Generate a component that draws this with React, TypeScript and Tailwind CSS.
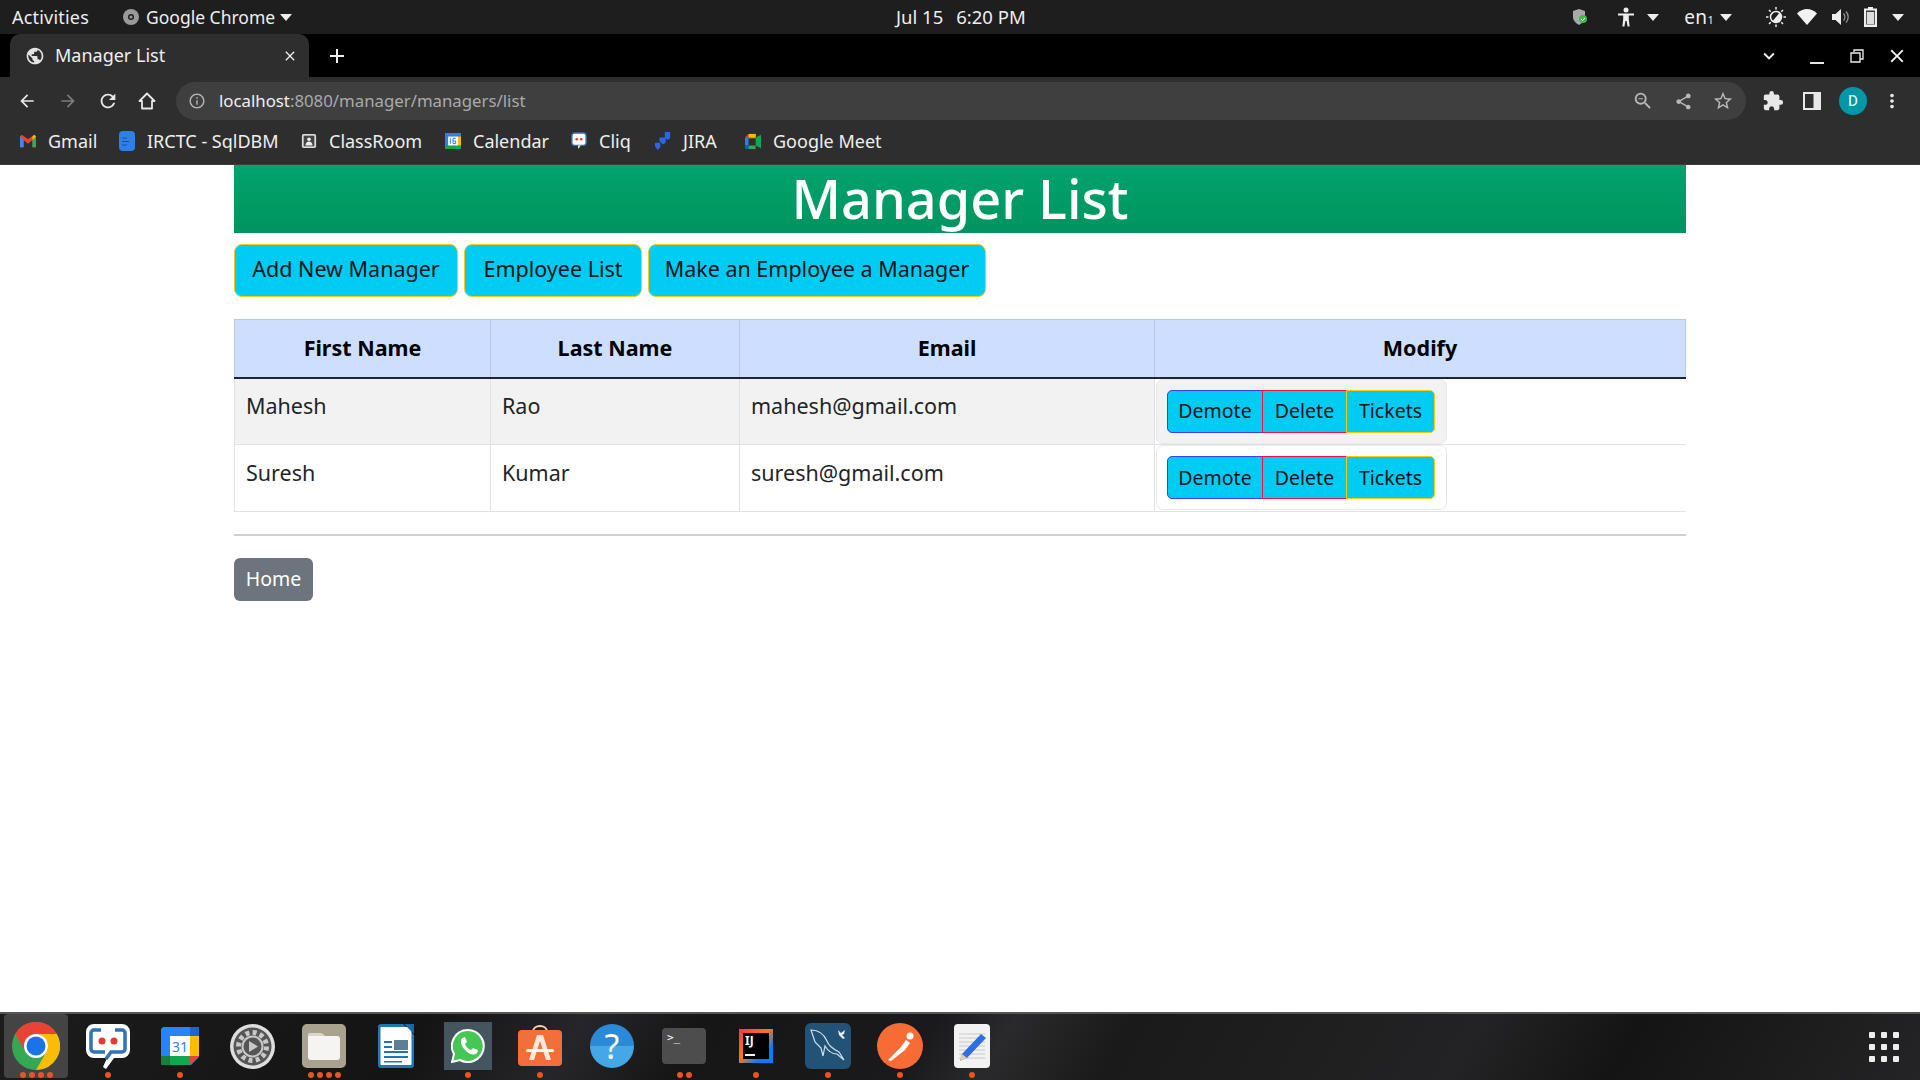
import { MdAdd, MdArrowBack, MdArrowForward, MdClose, MdExtension, MdInfoOutline, MdMoreVert, MdPublic, MdRefresh, MdShare, MdStarBorder, MdZoomOut, MdKeyboardArrowDown } from 'react-icons/md';

const ubuntu = "font-['Noto_Sans','Open_Sans',sans-serif]";

function Caret({ className = '' }: { className?: string }) {
  return (
    <svg width="12" height="7" viewBox="0 0 12 7" className={className}>
      <path d="M0 0h12L6 7z" fill="#eeeeee" />
    </svg>
  );
}

function TopBar() {
  return (
    <div className={`flex h-[34px] items-center bg-[#1e1e1e] text-[#eeeeee] ${ubuntu} relative`}>
      <span className="ml-3 w-[77px] text-[18px] tracking-[0.2px]">Activities</span>
      <svg width="16" height="16" viewBox="0 0 16 16" className="ml-[34px]">
        <circle cx="8" cy="8" r="8" fill="#9a9a9a" />
        <circle cx="8" cy="8" r="3" fill="#1e1e1e" />
        <circle cx="8" cy="8" r="1.6" fill="#9a9a9a" />
      </svg>
      <span className="ml-[7px] w-[128px] whitespace-nowrap text-[17.5px]">Google Chrome</span>
      <Caret className="ml-[6px]" />
      <div className="absolute left-[896px] top-0 flex h-[34px] items-center gap-[13px] text-[18.5px]">
        <span>Jul 15</span>
        <span>6:20 PM</span>
      </div>
      <div className="ml-auto flex items-center">
        <svg width="16" height="18" viewBox="0 0 16 18" className="mr-[29px]">
          <path d="M1 3l6-2 6 2v6c0 4-3 6-6 8-3-2-6-4-6-8z" fill="#a8a8a8" />
          <circle cx="11" cy="11" r="4" fill="#3dbb4e" />
          <path d="M9 11l1.5 1.5L13 10" stroke="#fff" strokeWidth="1" fill="none" />
        </svg>
        <svg width="18" height="20" viewBox="0 0 18 20" className="mr-[12px]">
          <circle cx="9" cy="3" r="2.5" fill="#eee" />
          <path d="M1 6.5h16v2h-5.2V12l.8 7.5h-2L9.6 14H8.4l-1 5.500h-2l.8-7.5V8.500H1z" fill="#eee" />
        </svg>
        <Caret className="mr-[25px]" />
        <span className="mr-[6px] text-[19px] leading-none tracking-[0.3px]">en<span className="text-[11px]">1</span></span>
        <Caret className="mr-[34px]" />
        <svg width="20" height="20" viewBox="0 0 20 20" className="mr-[11px]">
          <circle cx="10" cy="10" r="5.500" fill="none" stroke="#eee" strokeWidth="1.500" />
          <path d="M10 4.500a5.500 5.500 0 0 1 0 11z" fill="#eee" transform="rotate(40 10 10)" />
          <path d="M10 0v2.500M10 17.500V20M0 10h2.500M17.500 10H20M3 3l1.700 1.700M15.300 15.300L17 17M3 17l1.700-1.700M15.300 4.700L17 3" stroke="#eee" strokeWidth="1.500" />
        </svg>
        <svg width="20" height="16" viewBox="0 0 20 16" className="mr-[15px]">
          <path d="M0 4.500C5.500-1.500 14.500-1.500 20 4.500L10 16z" fill="#f2f2f2" />
        </svg>
        <svg width="19" height="16" viewBox="0 0 19 16" className="mr-[13px]">
          <path d="M0 5h3.500L9 0v16l-5.500-5H0z" fill="#eee" />
          <path d="M11.500 4.500a5 5 0 0 1 0 7M14 2.500a8 8 0 0 1 0 11" stroke="#999" strokeWidth="1.200" fill="none" />
        </svg>
        <svg width="13" height="20" viewBox="0 0 13 20" className="mr-[15px]">
          <path d="M4 0h5v1.500h4V20H0V1.500h4z" fill="#eee" />
          <rect x="2" y="3.500" width="9" height="14" fill="#3a3a3a" />
          <rect x="2.800" y="5" width="7.400" height="12" fill="#dddddd" />
        </svg>
        <Caret className="mr-[16px]" />
      </div>
    </div>
  );
}

function TabStrip() {
  return (
    <div className={`flex h-[43px] items-stretch bg-black text-[#eeeeee] ${ubuntu}`}>
      <div className="ml-[10px] flex w-[299px] items-center rounded-t-[10px] bg-[#2e2e2e]">
        <MdPublic className="ml-[15px] text-[#e4e4e4]" size={20} />
        <span className="ml-[10px] text-[18px]">Manager List</span>
        <MdClose className="ml-auto mr-[11px]" size={16} />
      </div>
      <div className="ml-[16px] flex items-center">
        <MdAdd size={24} />
      </div>
      <div className="ml-auto flex items-center text-[#f0f0f0]">
        <MdKeyboardArrowDown size={22} className="mr-[30px]" />
        <div className="mr-[26px] mt-[14px] h-[2px] w-[14px] bg-[#e6e6e6]" />
        <svg width="14" height="14" viewBox="0 0 14 14" className="mr-[22px]">
          <path d="M4 3V1h9v9h-3M1 4h9v9H1z" fill="none" stroke="#eee" strokeWidth="1.300" />
        </svg>
        <MdClose size={22} className="mr-[12px]" />
      </div>
    </div>
  );
}

function Toolbar() {
  return (
    <div className="flex h-[43px] items-center bg-[#2e2e2e] pt-[5px] text-[#e8e8e8]">
      <MdArrowBack size={20} className="ml-[17px]" />
      <MdArrowForward size={20} className="ml-[21px] text-[#7c7c7c]" />
      <MdRefresh size={22} className="ml-[19px]" />
      <svg width="20" height="20" viewBox="0 0 20 20" className="ml-[18px]">
        <path d="M10 2.500L2.500 10h2.500v7.500h10V10h2.500z" fill="none" stroke="#e8e8e8" strokeWidth="1.800" strokeLinejoin="round" />
      </svg>
      <div className={`ml-[19px] flex h-[38px] flex-1 items-center rounded-full bg-[#3f3f3f] ${ubuntu}`}>
        <MdInfoOutline size={18} className="ml-[12px] text-[#b0b0b0]" />
        <span className="ml-[13px] text-[16.8px] text-[#f0f0f0]">
          localhost<span className="text-[#aaaaaa]">:8080/manager/managers/list</span>
        </span>
        <MdZoomOut size={22} className="ml-auto text-[#b8b8b8]" />
        <MdShare size={19} className="ml-[20px] text-[#b8b8b8]" />
        <MdStarBorder size={22} className="ml-[19px] mr-[12px] text-[#b8b8b8]" />
      </div>
      <MdExtension size={22} className="ml-[16px]" />
      <svg width="18" height="18" viewBox="0 0 18 18" className="ml-[19px]">
        <path d="M0 0h18v18H0z" fill="#e8e8e8" />
        <rect x="2" y="2" width="8.500" height="14" fill="#2e2e2e" />
      </svg>
      <div className="ml-[18px] flex h-7 w-7 items-center justify-center rounded-full bg-[#0097a7] text-[15px] text-white font-['Roboto',sans-serif]">D</div>
      <MdMoreVert size={22} className="ml-[14px] mr-[17px]" />
    </div>
  );
}

function Bookmark({ icon, label, width }: { icon: React.ReactNode; label: string; width: string }) {
  return (
    <div className={`flex items-center ${width}`}>
      <span className="flex w-[16px] justify-center">{icon}</span>
      <span className="ml-[12px] whitespace-nowrap text-[18px]">{label}</span>
    </div>
  );
}

function BookmarksBar() {
  return (
    <div className={`flex h-[45px] items-center border-b border-[#3c3c3c] bg-[#2e2e2e] pb-[2px] pl-[20px] text-[#eeeeee] ${ubuntu}`}>
      <Bookmark
        width="w-[99px]"
        label="Gmail"
        icon={
          <svg width="18" height="14" viewBox="0 0 18 14">
            <path d="M0 2v12h4V6l5 4 5-4v8h4V2l-2-2-7 5-7-5z" fill="#ea4335" />
            <path d="M0 2v12h4V6z" fill="#4285f4" />
            <path d="M14 6v8h4V2z" fill="#34a853" />
            <path d="M16 0l2 2-4 4V2z" fill="#fbbc04" />
          </svg>
        }
      />
      <Bookmark
        width="w-[182px]"
        label="IRCTC - SqlDBM"
        icon={
          <svg width="16" height="20" viewBox="0 0 16 20">
            <rect width="16" height="20" rx="4" fill="#2f7fe8" />
            <path d="M3 7h5M3 10.500h7M3 14h5" stroke="#1a4fa0" strokeWidth="1.200" />
          </svg>
        }
      />
      <Bookmark
        width="w-[144px]"
        label="ClassRoom"
        icon={
          <svg width="18" height="18" viewBox="0 0 18 18">
            <rect x="1" y="1" width="16" height="16" rx="2" fill="#dcdcdc" />
            <rect x="3" y="3" width="12" height="12" fill="#444" />
            <circle cx="9" cy="7" r="2" fill="#eee" />
            <path d="M5 14c0-6 8-6 8 0z" fill="#eee" />
          </svg>
        }
      />
      <Bookmark
        width="w-[126px]"
        label="Calendar"
        icon={
          <svg width="18" height="18" viewBox="0 0 18 18">
            <rect width="18" height="18" fill="#2f7fe8" />
            <rect y="14" width="18" height="4" fill="#0da84f" />
            <rect x="14" y="4" width="4" height="10" fill="#fbbc04" />
            <rect x="3.500" y="4" width="11" height="10" fill="#fff" />
            <path d="M6 6v6M9 6H12M9 6v6h3V9H9" stroke="#1a73e8" strokeWidth="1" fill="none" />
          </svg>
        }
      />
      <Bookmark
        width="w-[84px]"
        label="Cliq"
        icon={
          <svg width="18" height="20" viewBox="0 0 18 20">
            <rect x="1" y="1" width="16" height="14" rx="3" fill="#fff" stroke="#2f6fb5" strokeWidth="1.500" />
            <path d="M8 15v4l3-4z" fill="#fff" />
            <circle cx="6.500" cy="8" r="1.500" fill="#e53935" />
            <circle cx="11.500" cy="8" r="1.500" fill="#e53935" />
          </svg>
        }
      />
      <Bookmark
        width="w-[90px]"
        label="JIRA"
        icon={
          <svg width="18" height="20" viewBox="0 0 18 20">
            <path d="M11 0h6v7l-3 2-3-3z M5 6h7v6l-3 2-4-4z M0 12h6v5l-3 3-3-4z" fill="#2f63e8" />
          </svg>
        }
      />
      <Bookmark
        width="w-[130px]"
        label="Google Meet"
        icon={
          <svg width="18" height="17" viewBox="0 0 18 17">
            <path d="M4 0h8v4H4z" fill="#fbbc04" />
            <path d="M4 0v4H0z" fill="#ea4335" />
            <path d="M0 4h4v9H0z" fill="#2f7fe8" />
            <path d="M0 13h4v4H2a2 2 0 0 1-2-2z" fill="#1a5cc8" />
            <path d="M4 13h8v4H4z" fill="#34a853" />
            <path d="M12 4l6-3v15l-6-3z" fill="#0da84f" />
            <path d="M12 0v5H4V0z" fill="#fbbc04" opacity=".6" />
          </svg>
        }
      />
    </div>
  );
}

function RowActions({ striped }: { striped: boolean }) {
  const btn = 'flex h-[43px] items-center justify-center border bg-[#00cbf3] text-[19.5px] text-[#07141a]';
  return (
    <div className={`ml-px flex h-[65px] w-[291px] items-center rounded-[7px] border border-[#e6e8ea] pl-[10px] ${striped ? 'bg-[#f2f2f2]' : 'bg-white'}`}>
      <button className={`${btn} w-[96px] rounded-l-[5px] border-[#3d3df5]`}>Demote</button>
      <button className={`${btn} -ml-px w-[85px] border-[#ff0a3c]`}>Delete</button>
      <button className={`${btn} -ml-px w-[89px] rounded-r-[5px] border-[#ffc80a]`}>Tickets</button>
    </div>
  );
}

const managers = [
  { first: 'Mahesh', last: 'Rao', email: 'mahesh@gmail.com', height: 'h-[66px]' },
  { first: 'Suresh', last: 'Kumar', email: 'suresh@gmail.com', height: 'h-[67px]' },
];

function Content() {
  const topBtn = 'flex h-[53px] items-center justify-center rounded-[8px] border border-[#ffc80a] bg-[#00cbf3] pb-[2px] text-[21.5px] text-[#07141a]';
  return (
    <div className={`h-[847px] bg-white ${ubuntu}`}>
      <div className="mx-auto w-[1452px]">
        <h1 className="flex h-[68px] items-center justify-center bg-[linear-gradient(#00a36e,#00945f)] pb-[2px] text-[54px] font-medium text-white">
          Manager List
        </h1>
        <div className="mt-[11px] flex gap-[6px]">
          <button className={`${topBtn} w-[224px]`}>Add New Manager</button>
          <button className={`${topBtn} w-[178px]`}>Employee List</button>
          <button className={`${topBtn} w-[338px]`}>Make an Employee a Manager</button>
        </div>
        <table className="mt-[22px] w-[1452px] table-fixed border-collapse">
          <colgroup>
            <col className="w-[256px]" />
            <col className="w-[249px]" />
            <col className="w-[415px]" />
            <col />
          </colgroup>
          <thead>
            <tr className="h-[58px] border-b-2 border-b-[#1f2530] bg-[#cddefe] text-[21.5px] font-bold text-black">
              <th className="border border-b-0 border-[#b6c8e6]">First Name</th>
              <th className="border border-b-0 border-[#b6c8e6]">Last Name</th>
              <th className="border border-b-0 border-[#b6c8e6]">Email</th>
              <th className="border border-b-0 border-[#b6c8e6]">Modify</th>
            </tr>
          </thead>
          <tbody className="text-[21.5px] text-[#212529]">
            {managers.map((m, i) => (
              <tr key={m.email} className={`${m.height} border-b border-[#dee2e6]`}>
                <td className={`border-x border-[#dee2e6] px-[11px] pb-[13px] pt-[4px] ${i === 0 ? 'bg-[#f2f2f2]' : ''}`}>{m.first}</td>
                <td className={`border-x border-[#dee2e6] px-[11px] pb-[13px] pt-[4px] ${i === 0 ? 'bg-[#f2f2f2]' : ''}`}>{m.last}</td>
                <td className={`border-x border-[#dee2e6] px-[11px] pb-[13px] pt-[4px] ${i === 0 ? 'bg-[#f2f2f2]' : ''}`}>{m.email}</td>
                <td className="p-0">
                  <RowActions striped={i === 0} />
                </td>
              </tr>
            ))}
          </tbody>
        </table>
        <hr className="mt-[22px] border-t-2 border-[#cfd0d2]" />
        <button className="mt-[22px] h-[43px] w-[79px] rounded-[6px] bg-[#6c757d] text-[19.5px] text-white">Home</button>
      </div>
    </div>
  );
}

function Dots({ n }: { n: number }) {
  return (
    <div className="absolute bottom-0 left-0 right-0 flex h-[6px] justify-center gap-[3px]">
      {Array.from({ length: n }).map((_, i) => (
        <span key={i} className="h-[6px] w-[6px] rounded-full bg-[#e95420]" />
      ))}
    </div>
  );
}

function DockItem({ dots, children, active }: { dots: number; children: React.ReactNode; active?: boolean }) {
  return (
    <div className="flex w-[72px] justify-center">
      <div className={`relative flex h-[64px] w-[64px] items-center justify-center ${active ? 'rounded-[4px] bg-[#444444]' : ''}`}>
        {children}
        <Dots n={dots} />
      </div>
    </div>
  );
}

function Dock() {
  return (
    <div className="flex h-[68px] items-start border-t-2 border-[#555555] bg-[linear-gradient(120deg,#1c1c1d_0%,#141414_22%,#26262a_30%,#161616_36%,#1a1a1c_48%,#2a2a2c_52%,#1a1a1a_58%,#232325_76%,#141414_84%,#242426_100%)]">
      <DockItem dots={4} active>
        <svg width="48" height="48" viewBox="0 0 48 48">
          <circle cx="24" cy="24" r="24" fill="#34a853" />
          <path d="M24 0A24 24 0 0 1 44.800 12H24A12 12 0 0 0 13.600 30L3.200 12A24 24 0 0 1 24 0z" fill="#ea4335" />
          <path d="M44.800 12A24 24 0 0 1 24 48L34.400 30A12 12 0 0 0 24 12z" fill="#fbbc04" />
          <circle cx="24" cy="24" r="12" fill="#fff" />
          <circle cx="24" cy="24" r="9.500" fill="#1a73e8" />
        </svg>
      </DockItem>
      <DockItem dots={1}>
        <svg width="48" height="48" viewBox="0 0 48 48">
          <path d="M10 2h28a8 8 0 0 1 8 8v18a8 8 0 0 1-8 8h-8l-8 11-3-2 4-9H10a8 8 0 0 1-8-8V10a8 8 0 0 1 8-8z" fill="#fff" />
          <path d="M17 8h-7a3 3 0 0 0-3 3v16a3 3 0 0 0 3 3h11M31 8h7a3 3 0 0 1 3 3v16a3 3 0 0 1-3 3h-11l-5 7" fill="none" stroke="#2f72b8" strokeWidth="3.500" />
          <circle cx="18" cy="19" r="3.500" fill="#e53935" />
          <circle cx="30" cy="19" r="3.500" fill="#e53935" />
        </svg>
      </DockItem>
      <DockItem dots={1}>
        <svg width="38" height="38" viewBox="0 0 38 38">
          <path d="M2 0h33a3 3 0 0 1 3 3v27l-8 8H3a3 3 0 0 1-3-3V2z" fill="#2684fc" />
          <rect x="29" width="9" height="9" fill="#1967d2" />
          <rect x="29" y="9" width="9" height="20" fill="#fbbc04" />
          <path d="M0 29h29v9H3a3 3 0 0 1-3-3z" fill="#0da84f" />
          <rect y="29" width="9" height="9" fill="#188038" />
          <path d="M29 29h9l-9 9z" fill="#ea4335" />
          <rect x="9" y="9" width="20" height="20" fill="#fff" />
          <text x="19" y="25" textAnchor="middle" fontSize="14" fill="#2684fc" fontFamily="Noto Sans">31</text>
        </svg>
      </DockItem>
      <DockItem dots={0}>
        <svg width="45" height="45" viewBox="0 0 45 45">
          <circle cx="22.500" cy="22.500" r="22.500" fill="#dedede" />
          <circle cx="22.500" cy="22.500" r="19" fill="#555" />
          <circle cx="22.500" cy="22.500" r="14" fill="none" stroke="#c8c8c8" strokeWidth="5" strokeDasharray="4 3.300" />
          <circle cx="22.500" cy="22.500" r="10" fill="none" stroke="#c8c8c8" strokeWidth="2" />
          <path d="M19 17l9 5.500-9 5.500z" fill="#c8c8c8" />
        </svg>
      </DockItem>
      <DockItem dots={4}>
        <svg width="44" height="44" viewBox="0 0 44 44">
          <rect width="44" height="44" rx="5" fill="#a8a28f" />
          <path d="M6 12a3 3 0 0 1 3-3h10l4 3h12a3 3 0 0 1 3 3v18a3 3 0 0 1-3 3H9a3 3 0 0 1-3-3z" fill="#f5f4f2" />
          <path d="M6 12a3 3 0 0 1 3-3h10l4 3z" fill="#d9d6cc" />
        </svg>
      </DockItem>
      <DockItem dots={0}>
        <svg width="36" height="44" viewBox="0 0 36 44">
          <path d="M3 0h22l11 11v30a3 3 0 0 1-3 3H3a3 3 0 0 1-3-3V3a3 3 0 0 1 3-3z" fill="#1c77b4" />
          <rect x="2.500" y="3" width="31" height="38" rx="1" fill="#fff" />
          <path d="M26 0l10 10V0z" fill="#18699f" />
          <rect x="16" y="16" width="14" height="10" fill="#5a7f96" />
          <path d="M6 17h8v2H6zM6 22h8v2H6zM6 27h24v2H6zM6 32h24v2H6zM6 37h18v1.500H6z" fill="#1c77b4" />
        </svg>
      </DockItem>
      <DockItem dots={1}>
        <div className="flex h-[48px] w-[48px] items-center justify-center bg-[#44555f]">
          <svg width="34" height="34" viewBox="0 0 34 34">
            <path d="M17 1a16 16 0 0 0-14 24L1 33l8-2a16 16 0 1 0 8-30z" fill="#45c655" stroke="#fff" strokeWidth="2" />
            <path d="M11 9l3-1 2 5-2 2c1 3 3 5 6 6l2-2 5 2-1 3c-3 3-8 1-11-2s-7-8-4-13z" fill="#fff" />
          </svg>
        </div>
      </DockItem>
      <DockItem dots={1}>
        <svg width="44" height="44" viewBox="0 0 44 44">
          <path d="M15 8c0-8 14-8 14 0" fill="none" stroke="#f0d9b5" strokeWidth="2" />
          <rect y="6" width="44" height="36" rx="4" fill="#f27038" />
          <path d="M19 11h6l8 25h-5l-6-19-6 19h-5z" fill="#fbe8dd" />
          <rect x="8" y="25" width="28" height="3" rx="1.500" fill="#fff" />
        </svg>
      </DockItem>
      <DockItem dots={0}>
        <div className={`flex h-[44px] w-[44px] items-center justify-center rounded-full bg-[linear-gradient(#2a8ad8_50%,#46a7e6_50%)] text-[34px] text-white ${ubuntu}`}>?</div>
      </DockItem>
      <DockItem dots={2}>
        <div className="relative h-[36px] w-[44px] rounded-[4px] bg-[#4d4d4d]">
          <span className="absolute left-[5px] top-[3px] font-['DejaVu_Sans_Mono',monospace] text-[11px] leading-[14px] text-white">&gt;_</span>
        </div>
      </DockItem>
      <DockItem dots={1}>
        <div className="flex h-[34px] w-[34px] items-center justify-center bg-[linear-gradient(135deg,#fe315d_0%,#f97a12_45%,#087cfa_75%)]">
          <div className="relative h-[26px] w-[26px] bg-black font-['Noto_Sans',sans-serif] text-[12px] font-bold leading-[15px] text-white">
            <span className="ml-[2px]">IJ</span>
            <span className="absolute bottom-[3px] left-[2px] h-[2px] w-[10px] bg-white" />
          </div>
        </div>
      </DockItem>
      <DockItem dots={1}>
        <svg width="46" height="46" viewBox="0 0 46 46">
          <rect width="46" height="46" rx="6" fill="#235277" />
          <path d="M6 7c8 0 13 4 16 11 2 6 8 9 12 11l5 8-7-6c-5 0-9-3-12-8l-2 10-2-8-6-6z" fill="none" stroke="#cfe0ea" strokeWidth="1.200" />
          <path d="M33 7l3 3 4-3-1 4-2 1 3 3-2 1-4-4z" fill="#eeeeee" />
        </svg>
      </DockItem>
      <DockItem dots={1}>
        <svg width="46" height="46" viewBox="0 0 46 46">
          <circle cx="23" cy="23" r="23" fill="#f76c35" />
          <path d="M11 37l13-13 5-7 4 3-5 7-14 11z" fill="#fff" />
          <circle cx="33" cy="13" r="3.500" fill="#fff" />
        </svg>
      </DockItem>
      <DockItem dots={1}>
        <svg width="36" height="44" viewBox="0 0 36 44">
          <rect width="36" height="44" rx="4" fill="#f2f2f2" />
          <path d="M5 10h26M5 14h26M5 18h26M5 22h26M5 26h26M5 30h26M5 34h26" stroke="#c8c8c8" strokeWidth="1" />
          <path d="M27 10l5 4-19 20-7 3 2-7z" fill="#2f6fe0" />
          <path d="M8 30l5 4-7 3z" fill="#e8cfa8" />
        </svg>
      </DockItem>
      <div className="ml-auto mr-[21px] grid h-[66px] grid-cols-3 content-center gap-[6px]">
        {Array.from({ length: 9 }).map((_, i) => (
          <span key={i} className="h-[6px] w-[6px] rounded-[1px] bg-[#eeeeee]" />
        ))}
      </div>
    </div>
  );
}

export default function App() {
  return (
    <div className="h-[1080px] w-[1920px] overflow-hidden">
      <TopBar />
      <TabStrip />
      <Toolbar />
      <BookmarksBar />
      <Content />
      <Dock />
    </div>
  );
}
